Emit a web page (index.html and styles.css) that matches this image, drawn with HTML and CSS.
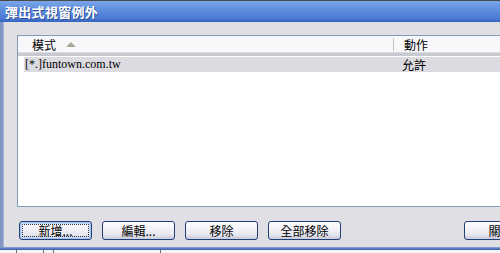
FILE: index.html
```html
<!DOCTYPE html>
<html>
<head>
<meta charset="utf-8">
<link rel="stylesheet" href="styles.css">
</head>
<body>
<div class="window">
  <div class="titlebar"><span class="title">彈出式視窗例外</span></div>
  <div class="frame">
    <div class="list">
      <div class="header">
        <div class="col col-mode"><span>模式</span><span class="sort"></span></div>
        <div class="col col-action"><span class="sep"></span><span>動作</span></div>
      </div>
      <div class="row">
        <div class="cell cell-mode">[*.]funtown.com.tw</div>
        <div class="cell cell-action">允許</div>
      </div>
    </div>
    <div class="buttons">
      <button class="btn focus"><span class="lbl">新增...</span></button>
      <button class="btn">編輯...</button>
      <button class="btn">移除</button>
      <button class="btn">全部移除</button>
      <span class="spacer"></span>
      <button class="btn">關閉</button>
    </div>
  </div>
  <div class="bottom-border"></div>
</div>
<div class="behind">
  <span class="v v1"></span><span class="v v2"></span><span class="v v3"></span><span class="v v4"></span>
</div>
</body>
</html>
```
FILE: styles.css
```css
html, body {
  margin: 0;
  padding: 0;
  width: 500px;
  height: 253px;
  overflow: hidden;
  background: #f2f2f2;
}
.window {
  width: 560px;
  height: 250px;
  display: flex;
  flex-direction: column;
  font-family: "Noto Sans CJK TC", "Noto Sans CJK SC", sans-serif;
  font-size: 12px;
  color: #000;
}
.titlebar {
  flex: none;
  border-top: 1px solid #4a4a4a;
  background: linear-gradient(#7aa6ea 0%, #5f8fde 40%, #4a7ad3 85%, #3463c0 100%);
  display: flex;
  align-items: center;
  padding-left: 5px;
  box-sizing: border-box;
  height: 22px;
}
.title {
  color: #fff;
  font-weight: bold;
  font-size: 13px;
  line-height: 14px;
  letter-spacing: 0.3px;
  text-shadow: 1px 1px 0 #2b4f98;
}
.frame {
  flex: 1;
  background: #e0dfe3;
  border-left: 3px solid #8196c4;
  box-shadow: inset 1px 0 0 #a9b6d6;
  padding: 13px 0 0 14px;
  display: flex;
  flex-direction: column;
}
.list {
  height: 170px;
  border: 1px solid #7f9db9;
  border-right: none;
  background: #fff;
  flex: none;
}
.header {
  height: 17px;
  background: #f8f8fb;
  border-bottom: 3px solid #c8c8cf;
  box-shadow: 0 -1px 0 #dcdce2 inset;
  display: flex;
  align-items: center;
}
.col {
  display: flex;
  align-items: center;
  height: 100%;
}
.col-mode {
  width: 375px;
  padding-left: 14px;
  box-sizing: border-box;
}
.sort {
  width: 0;
  height: 0;
  border-left: 5px solid transparent;
  border-right: 5px solid transparent;
  border-bottom: 5px solid #aca899;
  margin-left: 10px;
}
.col-action {
  flex: 1;
}
.sep {
  width: 1px;
  height: 13px;
  background: #c5c3bb;
  margin-right: 10px;
}
.row {
  margin-top: 1px;
  margin-left: 6px;
  height: 15px;
  background: #dcdbe1;
  display: flex;
  align-items: center;
}
.cell-mode {
  width: 377px;
  padding-left: 1px;
  font-family: "Liberation Serif", serif;
  font-size: 12px;
  line-height: 15px;
}
.cell-action {
  line-height: 15px;
}
.buttons {
  margin-top: 14px;
  display: flex;
  gap: 10px;
  padding-left: 2px;
}
.spacer {
  flex: none;
  width: 103px;
}
.btn {
  flex: none;
  width: 73px;
  height: 19px;
  padding: 0;
  margin: 0;
  border: 1px solid #1f3f77;
  border-radius: 3px;
  background: linear-gradient(#ffffff 0%, #f4f4f8 35%, #e6e6ee 75%, #c9c9d8 100%);
  font-family: "Noto Sans CJK TC", "Noto Sans CJK SC", sans-serif;
  font-size: 12px;
  line-height: 15px;
  color: #000;
  display: flex;
  align-items: center;
  justify-content: center;
}
.btn.focus {
  box-shadow: inset 0 0 0 1px #a8c4f0, inset 0 0 0 2px #c9dafa;
  position: relative;
}
.btn.focus::after {
  content: "";
  position: absolute;
  left: 2px;
  top: 2px;
  right: 2px;
  bottom: 2px;
  border: 1px dotted #333;
}
.bottom-border {
  height: 3px;
  flex: none;
  background: linear-gradient(#8fa4d4, #2f5aab);
}
.behind {
  height: 3px;
  background: #f4f4f4;
  position: relative;
}
.v {
  position: absolute;
  top: 0;
  width: 1px;
  height: 3px;
  background: #6f6f6f;
}
.v1 { left: 16px; }
.v2 { left: 43px; }
.v3 { left: 53px; }
.v4 { left: 160px; }
```
